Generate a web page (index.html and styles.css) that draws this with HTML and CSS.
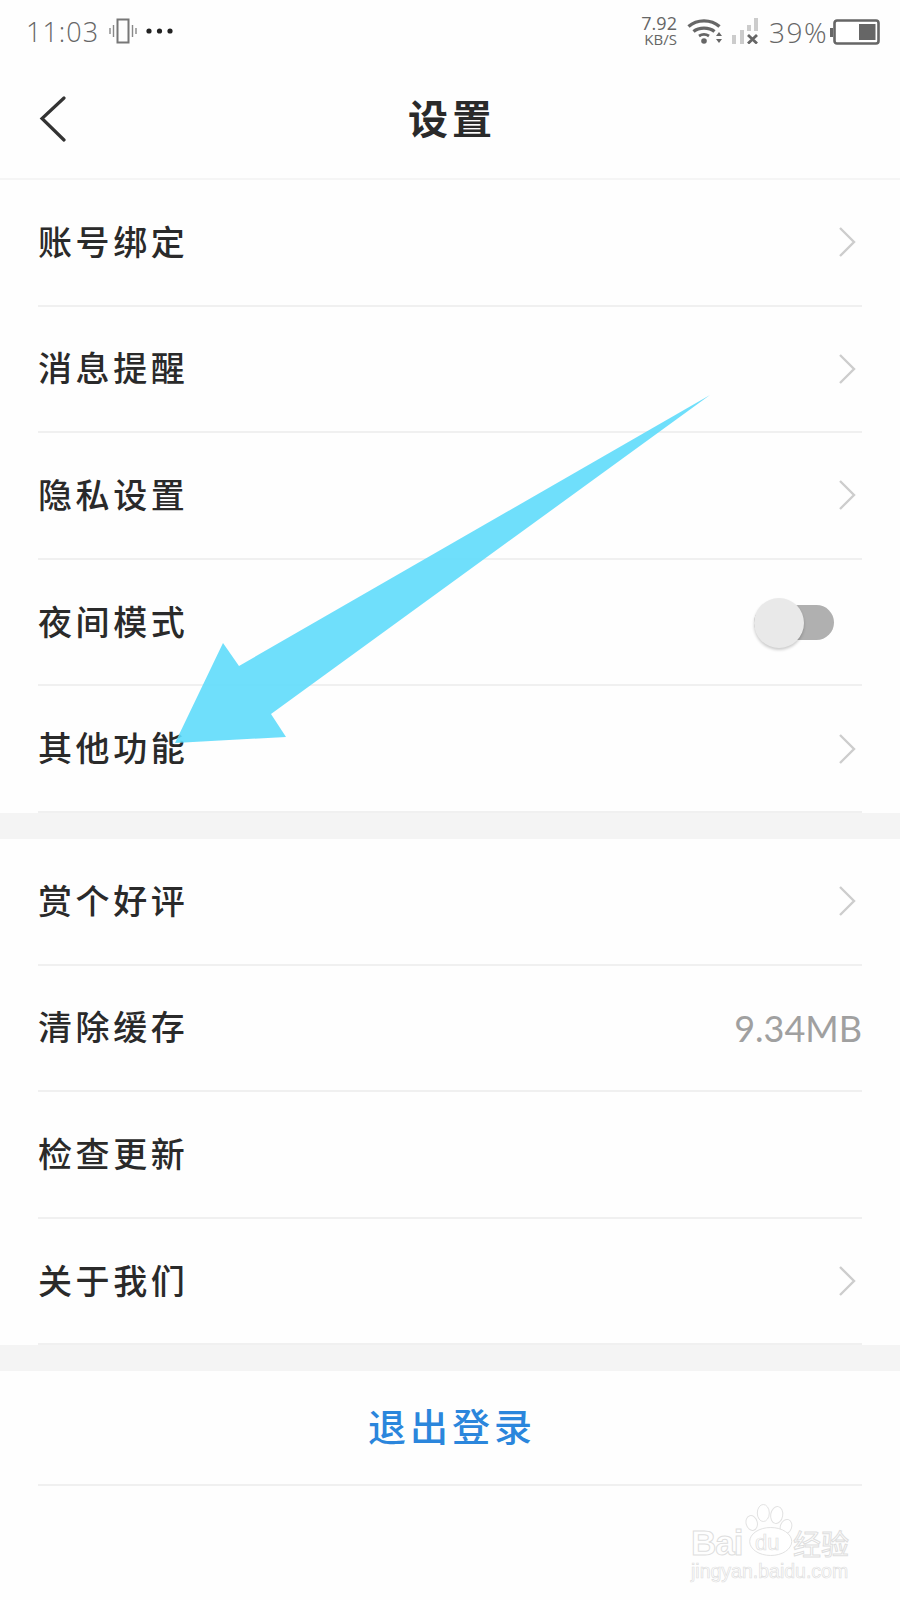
FILE: index.html
```html
<!DOCTYPE html>
<html lang="zh">
<head>
<meta charset="utf-8">
<title>设置</title>
<link rel="stylesheet" href="styles.css">
</head>
<body>
<div class="page">
  <div class="status">
    <div class="status-left">
      <span class="time">11:03</span>
      <svg class="ic-vib" width="28" height="26" viewBox="0 0 28 26"><rect x="8.5" y="1.5" width="11" height="23" fill="none" stroke="#777" stroke-width="2"/><path d="M4.5 7v12M1 10v6M23.500 7v12M27 10v6" stroke="#888" stroke-width="1.400"/></svg>
      <svg class="ic-dots" width="27" height="6" viewBox="0 0 27 6"><circle cx="3" cy="3" r="2.600" fill="#222"/><circle cx="13.500" cy="3" r="2.600" fill="#222"/><circle cx="24" cy="3" r="2.600" fill="#222"/></svg>
    </div>
    <div class="status-right">
      <div class="speed"><span>7.92</span><span class="speed-unit">KB/S</span></div>
      <svg class="ic-wifi" width="36" height="26" viewBox="0 0 36 26"><path d="M1.500 8.500C10 1 24 1 32.500 8.500" fill="none" stroke="#666" stroke-width="3.400"/><path d="M6.500 13.500C12 9 22 9 27.500 13.500" fill="none" stroke="#666" stroke-width="3.400"/><path d="M12 18c3-2 7-2 10 0" fill="none" stroke="#666" stroke-width="2.800"/><circle cx="17" cy="23" r="2.800" fill="#666"/><path d="M32 14l3 4h-6zM32 25l3-4h-6z" fill="#666"/></svg>
      <svg class="ic-signal" width="26" height="26" viewBox="0 0 26 26"><rect x="0" y="17" width="4" height="9" fill="#ccc"/><rect x="8" y="12" width="4" height="14" fill="#ccc"/><rect x="15" y="7" width="4" height="6" fill="#ccc"/><rect x="22" y="0" width="4" height="13" fill="#ccc"/><path d="M16 17l9 8.500M25 17l-9 8.500" stroke="#666" stroke-width="2.800"/></svg>
      <span class="pct">39%</span>
      <svg class="ic-batt" width="50" height="26" viewBox="0 0 50 26"><rect x="0" y="9" width="3" height="9" fill="#666"/><rect x="4.500" y="1.500" width="44" height="23" rx="2.500" fill="#fff" stroke="#666" stroke-width="2.600"/><rect x="29" y="5" width="16.500" height="16" fill="#666"/></svg>
    </div>
  </div>

  <header class="nav">
    <svg class="back" width="28" height="46" viewBox="0 0 28 46"><path d="M25 2 3 22.500 25 44" fill="none" stroke="#333" stroke-width="3.200" stroke-linecap="round" stroke-linejoin="miter"/></svg>
    <h1 class="title">设置</h1>
  </header>

  <section class="group">
    <div class="row"><span class="label">账号绑定</span><svg class="chev" width="18" height="32" viewBox="0 0 18 32"><path d="M2 2l14 14L2 30" fill="none" stroke="#cdcdcd" stroke-width="2.400"/></svg></div>
    <div class="row"><span class="label">消息提醒</span><svg class="chev" width="18" height="32" viewBox="0 0 18 32"><path d="M2 2l14 14L2 30" fill="none" stroke="#cdcdcd" stroke-width="2.400"/></svg></div>
    <div class="row"><span class="label">隐私设置</span><svg class="chev" width="18" height="32" viewBox="0 0 18 32"><path d="M2 2l14 14L2 30" fill="none" stroke="#cdcdcd" stroke-width="2.400"/></svg></div>
    <div class="row"><span class="label">夜间模式</span><div class="toggle"><div class="knob"></div></div></div>
    <div class="row"><span class="label">其他功能</span><svg class="chev" width="18" height="32" viewBox="0 0 18 32"><path d="M2 2l14 14L2 30" fill="none" stroke="#cdcdcd" stroke-width="2.400"/></svg></div>
  </section>
  <div class="gap"></div>
  <section class="group">
    <div class="row"><span class="label">赏个好评</span><svg class="chev" width="18" height="32" viewBox="0 0 18 32"><path d="M2 2l14 14L2 30" fill="none" stroke="#cdcdcd" stroke-width="2.400"/></svg></div>
    <div class="row"><span class="label">清除缓存</span><span class="value">9.34MB</span></div>
    <div class="row"><span class="label">检查更新</span></div>
    <div class="row"><span class="label">关于我们</span><svg class="chev" width="18" height="32" viewBox="0 0 18 32"><path d="M2 2l14 14L2 30" fill="none" stroke="#cdcdcd" stroke-width="2.400"/></svg></div>
  </section>
  <div class="gap"></div>
  <section class="group">
    <div class="row row-logout"><span class="logout">退出登录</span></div>
  </section>

  <svg class="arrow" width="900" height="1600" viewBox="0 0 900 1600"><polygon points="175,743 223,643 239,666 710,395 271,714 286,737" fill="#5fdcfb" fill-opacity=".9"/></svg>

  <div class="mark">
    <svg class="paw" width="50" height="54" viewBox="0 0 50 54"><g fill="#fff" stroke="#e2e2e2" stroke-width="1"><ellipse cx="6.700" cy="20" rx="5.600" ry="7.500" transform="rotate(-15 6.700 20)"/><ellipse cx="18.300" cy="10" rx="6" ry="8.500"/><ellipse cx="31.700" cy="12" rx="6" ry="8.500" transform="rotate(10 31.700 12)"/><ellipse cx="41" cy="23.700" rx="5.600" ry="7.500" transform="rotate(20 41 23.700)"/><ellipse cx="25.700" cy="38.500" rx="21" ry="14"/></g></svg>
    <div class="mark-main"><span class="mark-bai">Bai</span><span class="mark-du">du</span><span class="mark-jy">经验</span></div>
    <div class="mark-url">jingyan.baidu.com</div>
  </div>
</div>
</body>
</html>
```
FILE: styles.css
```css
* { box-sizing: border-box; }
html, body { margin: 0; padding: 0; background: #fff; }
body { font-family: "Noto Sans CJK SC", "Noto Sans", sans-serif; }
.page { position: relative; width: 900px; height: 1600px; overflow: hidden; background: #fefefe; }

.status { height: 62px; padding: 16px 20px 0 26px; display: flex; justify-content: space-between; align-items: flex-start; }
.status-left, .status-right { display: flex; align-items: center; height: 32px; }
.time { font-family: "Open Sans", sans-serif; font-weight: 300; font-size: 27px; line-height: 32px; letter-spacing: 1px; color: #666; }
.ic-vib { margin-left: 10px; margin-top: -2px; }
.ic-dots { margin-left: 9px; margin-top: -3px; }
.speed { display: flex; flex-direction: column; align-items: flex-end; font-family: "Open Sans", sans-serif; font-size: 18px; line-height: 17px; color: #666; margin-top: -3px; }
.speed-unit { font-size: 15px; line-height: 15px; }
.ic-wifi { margin-left: 10px; margin-top: -2px; }
.ic-signal { margin-left: 9px; margin-top: -2px; }
.pct { font-family: "Open Sans", sans-serif; font-weight: 300; font-size: 28px; line-height: 32px; letter-spacing: 1.500px; color: #666; margin-left: 11px; }
.ic-batt { margin-left: 2px; margin-top: -1px; }

.nav { height: 118px; display: flex; align-items: center; justify-content: center; position: relative; border-bottom: 2px solid #f5f5f5; padding-bottom: 6px; }
.back { position: absolute; left: 39px; top: 34px; }
.title { margin: 0; padding-left: 4px; font-size: 40px; font-weight: 700; letter-spacing: 4px; line-height: 50px; color: #2a2a2a; }

.group { background: #fefefe; }
.row { height: 126.600px; margin: 0 38px; border-bottom: 2px solid #f0f0f0; display: flex; align-items: center; justify-content: space-between; }
.label { margin-bottom: 3px; font-size: 34px; font-weight: 500; letter-spacing: 3.600px; line-height: 44px; color: #2a2a2a; }
.chev { margin-right: 6px; }
.value { font-family: "Lato", sans-serif; font-weight: 400; font-size: 36px; color: #a0a0a0; }
.gap { height: 26px; background: #f4f4f4; }

.toggle { position: relative; width: 80px; height: 35px; margin-right: 28px; border-radius: 18px; background: #b0b0b0; }
.knob { position: absolute; left: 0; top: -7px; width: 50px; height: 50px; border-radius: 50%; background: #e9e9e9; box-shadow: 0 2px 3px rgba(0,0,0,.2); }

.row-logout { height: 115px; justify-content: center; padding-bottom: 6px; }
.logout { padding-left: 4px; font-size: 38px; font-weight: 500; letter-spacing: 4px; color: #2b86dc; }

.arrow { position: absolute; left: 0; top: 0; pointer-events: none; }

.mark { position: absolute; left: 691px; top: 1503px; width: 175px; height: 80px; }
.paw { position: absolute; left: 54px; top: 0; }
.mark-main { position: absolute; left: 0; top: 20px; display: flex; align-items: center; height: 40px; }
.mark-bai, .mark-du, .mark-jy { color: transparent; -webkit-text-stroke: 1px #dedede; font-family: "Liberation Sans", sans-serif; }
.mark-bai { width: 49px; font-size: 35px; font-weight: 700; letter-spacing: -1px; }
.mark-du { width: 25px; margin-left: 15px; margin-right: 13px; font-size: 22px; font-weight: 400; -webkit-text-stroke: .7px #dedede; }
.mark-jy { font-family: "Noto Sans CJK SC", sans-serif; font-size: 28px; }
.mark-url { position: absolute; left: 0; top: 57px; font-family: "Liberation Sans", sans-serif; font-size: 19.500px; color: transparent; -webkit-text-stroke: .7px #dedede; white-space: nowrap; }
```
